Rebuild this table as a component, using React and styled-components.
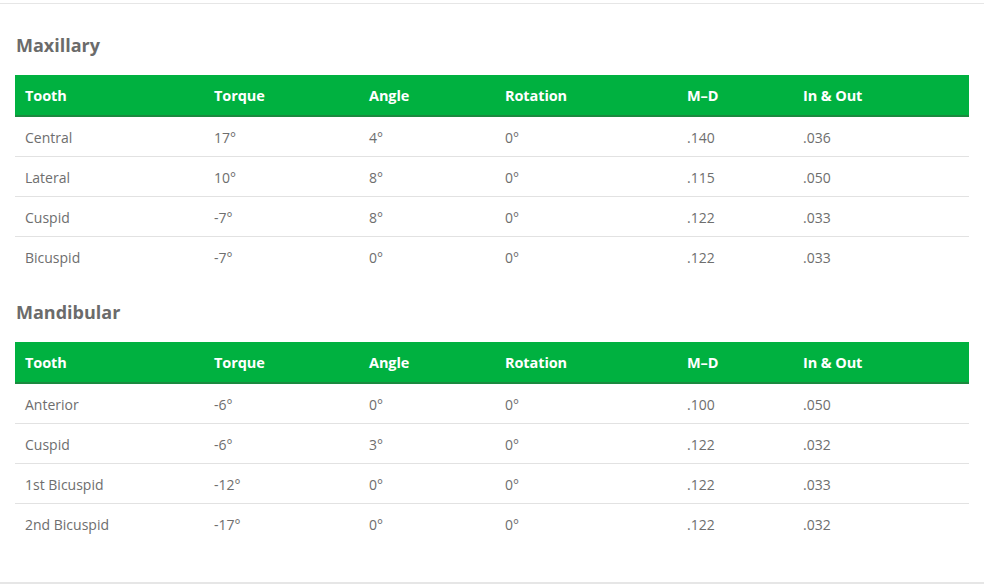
import styled, { createGlobalStyle } from 'styled-components';

const GlobalStyle = createGlobalStyle`
    html, body {
        margin: 0;
        padding: 0;
        background: #fff;
        font-family: "Open Sans", "Noto Sans", sans-serif;
    }
`;

const Page = styled.div`
    margin-top: 3px;
    height: 581px;
    box-sizing: border-box;
    border-top: 1px solid #e6e6e6;
    border-bottom: 2px solid #e6e6e6;
    padding: 0 15px;
`;

const Heading = styled.h2`
    margin: ${props => props.top || "29px"} 0 ${props => props.bottom || "18px"} 1px;
    font-size: 18px;
    line-height: 24px;
    font-weight: 700;
    color: #6b6b6b;
`;

const Table = styled.table`
    width: 954px;
    border-collapse: collapse;
    table-layout: fixed;
`;

const HeadCell = styled.th`
    background: #00b140;
    color: #fff;
    font-size: 14.5px;
    font-weight: 700;
    text-align: left;
    height: 39px;
    padding: 1px 10px 0;
    border-bottom: 2px solid #1b8a3f;
    letter-spacing: -0.1px;
`;

const Row = styled.tr`
    border-bottom: ${props => props.last ? "none" : "1px solid #e2e2e2"};
`;

const Cell = styled.td`
    height: 38px;
    padding: 1px 10px 0;
    font-size: 14px;
    color: #6e6e6e;
`;

const widths = [189, 155, 136, 182, 116, 176];
const headers = ["Tooth", "Torque", "Angle", "Rotation", "M\u2013D", "In & Out"];

const maxillary = [
    ["Central", "17°", "4°", "0°", ".140", ".036"],
    ["Lateral", "10°", "8°", "0°", ".115", ".050"],
    ["Cuspid", "-7°", "8°", "0°", ".122", ".033"],
    ["Bicuspid", "-7°", "0°", "0°", ".122", ".033"],
];

const mandibular = [
    ["Anterior", "-6°", "0°", "0°", ".100", ".050"],
    ["Cuspid", "-6°", "3°", "0°", ".122", ".032"],
    ["1st Bicuspid", "-12°", "0°", "0°", ".122", ".033"],
    ["2nd Bicuspid", "-17°", "0°", "0°", ".122", ".032"],
];

function SpecTable({ rows }) {
    return (
        <Table>
            <colgroup>
                {widths.map((w, i) => <col key={i} style={{ width: w }} />)}
            </colgroup>
            <thead>
                <tr>{headers.map(h => <HeadCell key={h}>{h}</HeadCell>)}</tr>
            </thead>
            <tbody>
                {rows.map((r, i) => (
                    <Row key={i} last={i === rows.length - 1}>
                        {r.map((c, j) => <Cell key={j}>{c}</Cell>)}
                    </Row>
                ))}
            </tbody>
        </Table>
    );
}

export default function App() {
    return (
        <>
            <GlobalStyle />
            <Page>
                <Heading>Maxillary</Heading>
                <SpecTable rows={maxillary} />
                <Heading top="24px" bottom="18px">Mandibular</Heading>
                <SpecTable rows={mandibular} />
            </Page>
        </>
    );
}
